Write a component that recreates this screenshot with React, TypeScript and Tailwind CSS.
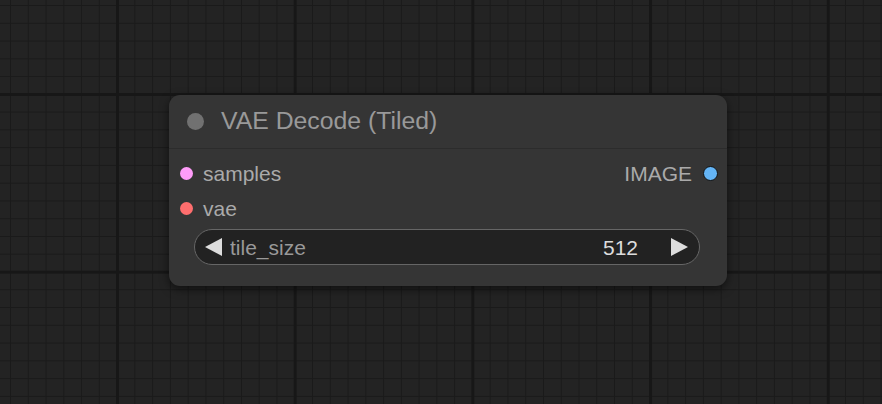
import React from "react";

function LeftArrow() {
  return (
    <svg width="17" height="18" viewBox="0 0 17 18" className="shrink-0">
      <polygon points="17,0 17,18 0,9" fill="#dddddd" />
    </svg>
  );
}

function RightArrow() {
  return (
    <svg width="17" height="18" viewBox="0 0 17 18" className="shrink-0">
      <polygon points="0,0 0,18 17,9" fill="#dddddd" />
    </svg>
  );
}

export default function App() {
  return (
    <div
      className="relative w-[882px] h-[404px] overflow-hidden bg-[#232323] [background-image:linear-gradient(to_right,#171717_3px,transparent_3px),linear-gradient(to_bottom,#171717_3px,transparent_3px),linear-gradient(to_right,#1a1a1a_1px,transparent_1px),linear-gradient(to_bottom,#1a1a1a_1px,transparent_1px)] [background-size:177.7px_177.7px,177.7px_177.7px,17.77px_17.77px,17.77px_17.77px] [background-position:116px_0,0_93px,10px_0,0_5px]"
      style={{ fontFamily: '"Liberation Sans", Arial, sans-serif' }}
    >
      <div className="absolute left-[169px] top-[95px] w-[558px] h-[191px] rounded-[11px] bg-[#353535] shadow-[0_3px_10px_rgba(0,0,0,0.55)] flex flex-col">
        {/* Title */}
        <div className="h-[54px] flex items-center pl-[18px] gap-[17px] border-b border-[#2c2c2c]">
          <div className="w-[17px] h-[17px] rounded-full bg-[#717171] shrink-0" />
          <span className="text-[24.8px] leading-none text-[#999999]">VAE Decode (Tiled)</span>
        </div>
        {/* Body */}
        <div className="flex flex-col pt-[7px]">
          <div className="h-[35px] flex items-center justify-between pl-[11px] pr-[9px]">
            <div className="flex items-center gap-[10px]">
              <div className="w-[13px] h-[13px] rounded-full bg-[#ff9cf9]" />
              <span className="text-[21px] leading-none text-[#aaaaaa]">samples</span>
            </div>
            <div className="flex items-center gap-[11px]">
              <span className="text-[21px] leading-none text-[#aaaaaa]">IMAGE</span>
              <div className="w-[15px] h-[15px] rounded-full bg-[#64b5f6] border-[1.5px] border-[#111111]" />
            </div>
          </div>
          <div className="h-[35px] flex items-center pl-[11px] gap-[10px]">
            <div className="w-[13px] h-[13px] rounded-full bg-[#ff6e6e]" />
            <span className="text-[21px] leading-none text-[#aaaaaa]">vae</span>
          </div>
          <div className="mt-[3px] ml-[25px] w-[506px] h-[36px] rounded-full bg-[#222222] border border-[#666666] flex items-center pl-[10px] pr-[11px]">
            <LeftArrow />
            <span className="ml-[8px] text-[21px] leading-none text-[#999999]">tile_size</span>
            <span className="ml-auto text-[21px] leading-none text-[#dddddd]">512</span>
            <span className="ml-[33px]"><RightArrow /></span>
          </div>
        </div>
      </div>
    </div>
  );
}
